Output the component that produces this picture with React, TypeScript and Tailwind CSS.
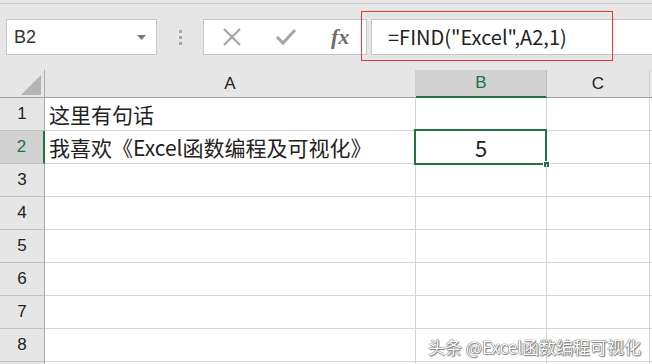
import React from 'react';

const cjk = '"Noto Sans CJK SC", "Microsoft YaHei", sans-serif';
const latin = '"Liberation Sans", Arial, sans-serif';

const rows = [1, 2, 3, 4, 5, 6, 7, 8, 0];

const App: React.FC = () => {
  return (
    <div className="w-[652px] h-[364px] overflow-hidden bg-white relative" style={{ fontFamily: cjk }}>
      {/* toolbar / formula bar */}
      <div className="h-[70px] bg-[#e6e6e6] flex flex-col">
        <div className="h-[3px]" />
        <div className="h-px bg-[#cfcfcf]" />
        <div className="flex items-start pt-[15px] pl-[6px]">
          <div className="w-[151px] h-[36px] bg-white border border-[#c6c6c6] flex items-center justify-between pl-[7px] pr-[10px]">
            <span className="text-[18px] text-[#333]" style={{ fontFamily: latin }}>B2</span>
            <svg width="9" height="5" viewBox="0 0 9 5">
              <path d="M0 0 L9 0 L4.5 5 Z" fill="#777" />
            </svg>
          </div>
          <div className="w-[46px] h-[36px] flex flex-col items-center justify-center gap-[3px]">
            <div className="w-[3px] h-[3px] bg-[#a8a8a8]" />
            <div className="w-[3px] h-[3px] bg-[#a8a8a8]" />
            <div className="w-[3px] h-[3px] bg-[#a8a8a8]" />
          </div>
          <div className="w-[164px] h-[36px] bg-white border border-[#c6c6c6] flex items-center">
            <svg width="20" height="18" viewBox="0 0 20 18" className="ml-[18px]">
              <path d="M2 1 L18 17 M18 1 L2 17" stroke="#a6a6a6" strokeWidth="2.2" />
            </svg>
            <svg width="22" height="18" viewBox="0 0 22 18" className="ml-[33px]">
              <path d="M2 9 L8 15 L20 2" stroke="#a6a6a6" strokeWidth="3" fill="none" />
            </svg>
            <span
              className="ml-[34px] text-[22px] italic font-bold text-[#6e6e6e] leading-none"
              style={{ fontFamily: '"Liberation Serif", "Times New Roman", serif' }}
            >
              fx
            </span>
          </div>
          <div className="ml-[4px] flex-1 h-[36px] bg-white border border-y-[#c6c6c6] border-l-[#c6c6c6] border-r-0 flex items-center pl-[16px]">
            <span className="text-[20px] text-[#222] leading-none">=FIND("Excel",A2,1)</span>
          </div>
        </div>
      </div>

      {/* red highlight box */}
      <div className="absolute left-[361px] top-[11px] w-[252px] h-[50px] border border-[#ee3434]" />

      {/* grid */}
      <div className="grid grid-cols-[45px_371px_131px_103px_1fr] grid-rows-[28px_repeat(9,33px)] text-[#222]">
        <div className="bg-[#e6e6e6] border-r border-b border-r-[#ababab] border-b-[#9f9f9f] flex items-end justify-end pr-[3px] pb-[2px]">
          <svg width="20" height="20" viewBox="0 0 20 20">
            <path d="M20 0 L20 20 L0 20 Z" fill="#b4b4b4" />
          </svg>
        </div>
        <div className="bg-[#e6e6e6] border-r border-b border-r-[#d0d0d0] border-b-[#9f9f9f] flex items-center justify-center text-[17px]" style={{ fontFamily: latin }}>A</div>
        <div className="bg-[#d2d2d2] border-r border-r-[#c0c0c0] border-b-2 border-b-[#217346] flex items-center justify-center text-[17px] text-[#217346]" style={{ fontFamily: latin }}>B</div>
        <div className="bg-[#e6e6e6] border-r border-b border-r-[#d0d0d0] border-b-[#9f9f9f] flex items-center justify-center text-[17px]" style={{ fontFamily: latin }}>C</div>
        <div className="bg-[#e6e6e6] border-b border-b-[#9f9f9f]" />

        {rows.map((r, i) => (
          <React.Fragment key={i}>
            <div
              className={
                r === 2
                  ? 'bg-[#d2d2d2] border-r-2 border-r-[#217346] border-b border-b-[#c0c0c0] flex items-center justify-center text-[17px] text-[#217346]'
                  : 'bg-[#e6e6e6] border-r border-r-[#ababab] border-b border-b-[#c0c0c0] flex items-center justify-center text-[17px]'
              }
              style={{ fontFamily: latin }}
            >
              {r > 0 ? r : ''}
            </div>
            <div className="border-r border-b border-[#d4d4d4] flex items-center pl-[4px] text-[21px] leading-none whitespace-nowrap">
              {r === 1 ? '这里有句话' : r === 2 ? '我喜欢《Excel函数编程及可视化》' : ''}
            </div>
            <div className="border-r border-b border-[#d4d4d4] relative flex items-center justify-center text-[22px] leading-none">
              {r === 2 && (
                <>
                  <span>5</span>
                  <div className="absolute left-[-2px] top-[-2px] right-[-1px] bottom-[-2px] border-2 border-[#217346]" />
                  <div className="absolute right-[-4px] bottom-[-5px] w-[7px] h-[7px] bg-[#217346] border border-white" />
                </>
              )}
            </div>
            <div className="border-r border-b border-[#d4d4d4]" />
            <div className="border-b border-[#d4d4d4]" />
          </React.Fragment>
        ))}
      </div>

      {/* watermark */}
      <div
        className="absolute left-[428px] top-[338px] text-[17px] text-white leading-none whitespace-nowrap"
        style={{ textShadow: '0 0 1px #555, 0 0 1px #555, 1px 1px 1px #888' }}
      >
        头条 @Excel函数编程可视化
      </div>
    </div>
  );
};

export default App;
